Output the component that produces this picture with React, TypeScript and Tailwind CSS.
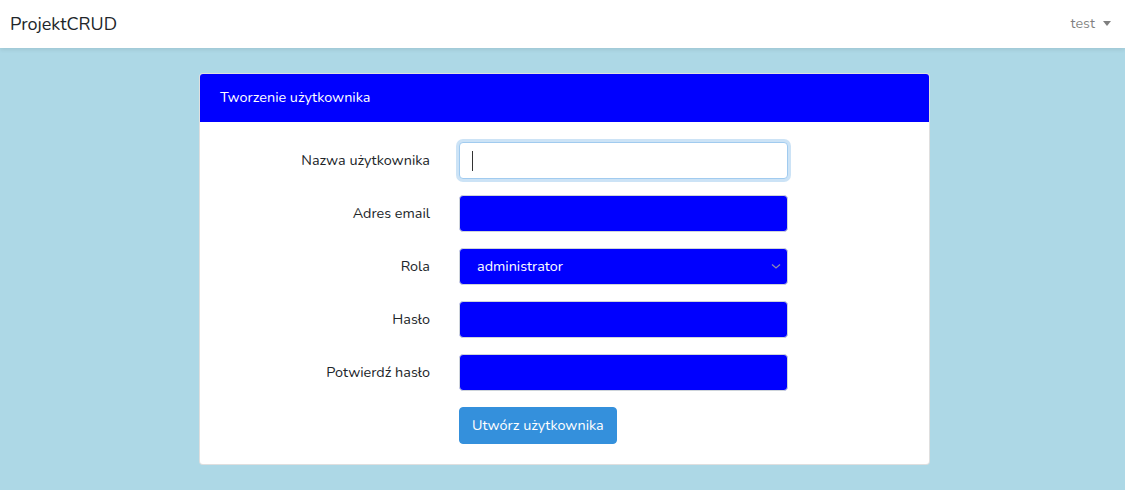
import React from "react";

const rows = ["Adres email"];

export default function App() {
  const font = { fontFamily: "Nunito, Lato, 'Open Sans', sans-serif" };
  return (
    <div className="min-h-[490px] bg-[#add8e6] text-[14.4px] leading-[1.6] text-[#212529]" style={font}>
      <nav className="h-[48px] bg-white shadow-[0_2px_4px_rgba(0,0,0,0.08)] flex items-center justify-between pl-[10px] pr-[14px]">
        <span className="text-[18px] text-[#212529]">ProjektCRUD</span>
        <span className="flex items-center gap-[8px] text-[rgba(0,0,0,0.5)]">
          test
          <span className="w-0 h-0 border-l-[4px] border-r-[4px] border-t-[5px] border-l-transparent border-r-transparent border-t-[rgba(0,0,0,0.5)]" />
        </span>
      </nav>
      <div className="pt-[25px] pb-[25px]">
        <div className="ml-[199px] w-[731px] bg-white border border-[rgba(0,0,0,0.125)] rounded-[4px] overflow-hidden">
          <div className="bg-[#0000ff] text-white h-[48px] px-[20px] flex items-center">Tworzenie użytkownika</div>
          <div className="px-[20px] pt-[20px] pb-[20px]">
            <Row label="Nazwa użytkownika">
              <div className="h-[37px] w-[329px] rounded-[4px] border border-[#a1cbef] bg-white shadow-[0_0_0_3px_rgba(52,144,220,0.25)] flex items-center pl-[12px]">
                <span className="w-[1px] h-[20px] bg-[#333]" />
              </div>
            </Row>
            {rows.map((r) => (
              <Row key={r} label={r}>
                <Blue />
              </Row>
            ))}
            <Row label="Rola">
              <div className="h-[37px] w-[329px] rounded-[4px] border border-[#ced4da] bg-[#0000ff] flex items-center justify-between pl-[17px] pr-[6px] text-white">
                <span>administrator</span>
                <svg width="10" height="7" viewBox="0 0 10 7">
                  <path d="M1 1.5 L5 5 L9 1.5" fill="none" stroke="#8a8ab0" strokeWidth="1.3" />
                </svg>
              </div>
            </Row>
            <Row label="Hasło">
              <Blue />
            </Row>
            <Row label="Potwierdź hasło">
              <Blue />
            </Row>
            <div className="flex">
              <div className="w-[239px]" />
              <button className="h-[37px] px-[12px] rounded-[4px] bg-[#3490dc] border border-[#3490dc] text-white">
                Utwórz użytkownika
              </button>
            </div>
          </div>
        </div>
      </div>
    </div>
  );
}

function Blue() {
  return <div className="h-[37px] w-[329px] rounded-[4px] border border-[#ced4da] bg-[#0000ff]" />;
}

function Row({ label, children }: { label: string; children: React.ReactNode }) {
  return (
    <div className="flex items-center mb-[16px]">
      <div className="w-[210px] text-right">{label}</div>
      <div className="w-[29px]" />
      {children}
    </div>
  );
}
